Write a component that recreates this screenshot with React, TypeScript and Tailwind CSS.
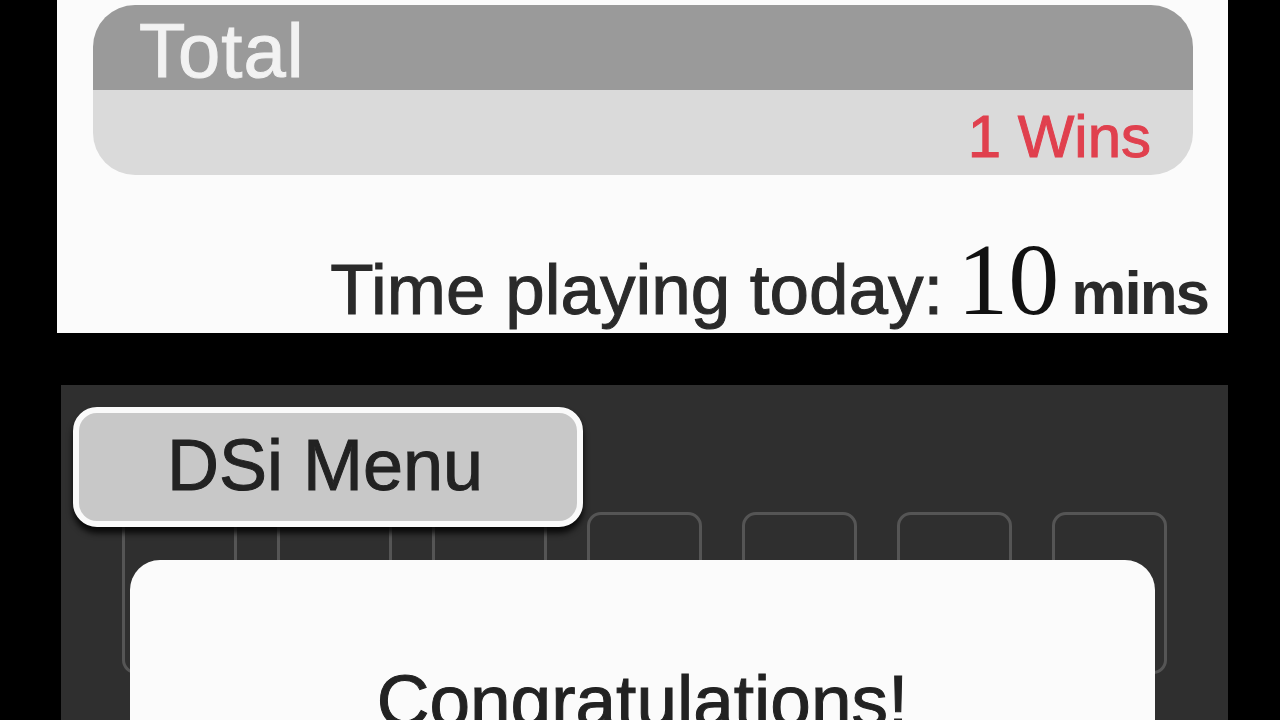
export default function App() {
  const slots = [0, 1, 2, 3, 4, 5, 6];

  return (
    <div className="w-[1280px] h-[720px] bg-black overflow-hidden flex flex-col font-['Liberation_Sans',Arial,sans-serif]">
      {/* Top screen */}
      <div className="ml-[57px] w-[1171px] h-[333px] shrink-0 bg-[#fbfbfb] flex flex-col">
        <div className="mt-[5px] ml-[36px] mr-[35px] h-[170px] rounded-[42px] overflow-hidden flex flex-col">
          <div className="h-[85px] bg-[#9a9a9a] flex items-end pl-[46px] pb-[8px]">
            <span className="text-[76px] leading-[0.8] text-[#f2f2f2] [-webkit-text-stroke:1px_#f2f2f2] tracking-[1px]">Total</span>
          </div>
          <div className="h-[85px] bg-[#dadada] flex items-end justify-end pr-[42px] pb-[14px]">
            <span className="text-[60px] leading-[0.8] text-[#e0404e] [-webkit-text-stroke:1px_#e0404e]">1 Wins</span>
          </div>
        </div>
        <div className="flex-1 flex items-end justify-end pr-[20px] pb-[2px]">
          <div className="flex items-baseline leading-none">
            <span className="text-[71px] text-[#2a2a2a] [-webkit-text-stroke:1px_#2a2a2a]">Time playing today:</span>
            <span className="ml-[14px] text-[102px] text-[#111] font-['Liberation_Serif',serif]">10</span>
            <span className="ml-[12px] text-[62px] text-[#2a2a2a] font-bold tracking-[-2px]">mins</span>
          </div>
        </div>
      </div>

      {/* Bottom screen */}
      <div className="mt-[52px] ml-[61px] w-[1167px] flex-1 bg-[#2f2f2f] relative flex flex-col">
        <button className="relative z-10 mt-[22px] ml-[12px] w-[510px] h-[120px] rounded-[24px] border-[6px] border-[#fafafa] bg-[#c8c8c8] shadow-[0_6px_6px_rgba(0,0,0,0.85)] flex items-center justify-center">
          <span className="text-[72px] leading-none text-[#222] [-webkit-text-stroke:1px_#222] -mt-[4px] pr-[6px]">DSi Menu</span>
        </button>

        <div className="-mt-[15px] ml-[61px] flex gap-[40px]">
          {slots.map((s) => (
            <div key={s} className="w-[115px] h-[162px] rounded-[14px] border-[3px] border-[#555]" />
          ))}
        </div>

        {/* Dialog */}
        <div className="absolute z-20 left-[69px] top-[175px] w-[1025px] h-[200px] rounded-t-[30px] bg-[#fbfbfb] flex justify-center">
          <span className="mt-[104px] text-[73px] leading-none text-[#222] [-webkit-text-stroke:1px_#222]">Congratulations!</span>
        </div>
      </div>
    </div>
  );
}
